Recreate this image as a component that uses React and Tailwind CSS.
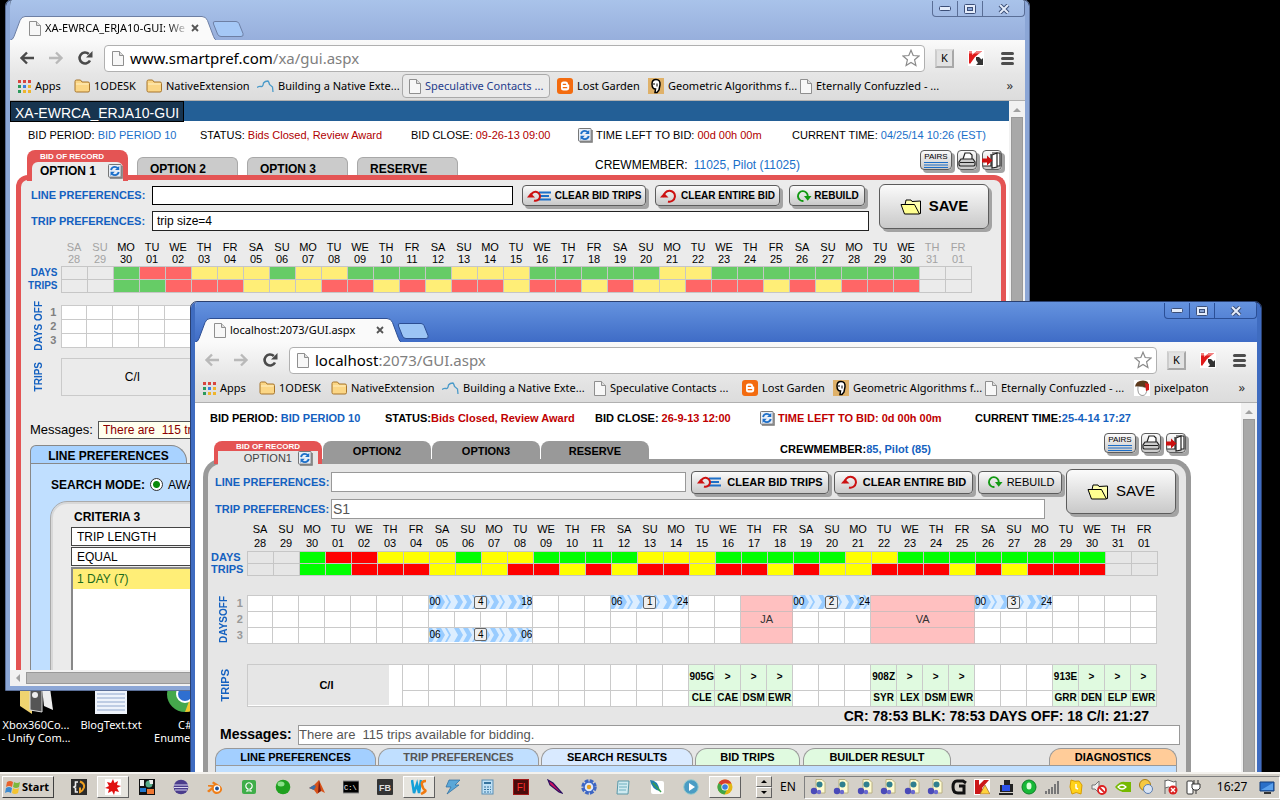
import React from "react";

const DAYS = "..GRRYYYGYYGGGGYYYGGGGGYYGGGGGGGG..";
const TRIPS = "..GGRRRYYYRRYRYRRYRRYRYYRRRYRYRRR..";
const WEEK = ["SA", "SU", "MO", "TU", "WE", "TH", "FR"];
const DATES = [28, 29, 30, ...Array.from({ length: 31 }, (_, i) => i + 1), 1].map((n) => String(n).padStart(2, "0"));
const SOFT = { G: "bg-[#66cc66]", R: "bg-[#ff6666]", Y: "bg-[#ffee77]", ".": "" };
const VIVID = { G: "bg-[#00ff00]", R: "bg-[#ff0000]", Y: "bg-[#ffff00]", ".": "" };

/* ---------- small drawings ---------- */
const Page = ({ className = "h-[15px] w-[12px]" }) => (
  <svg viewBox="0 0 12 15" className={className + " shrink-0"}>
    <path d="M.5 .5h7l4 4v10h-11z" fill="#f7f7f7" stroke="#8f8f8f" />
    <path d="M7.500 .5v4h4" fill="#ddd" stroke="#8f8f8f" />
  </svg>
);
const Folder = () => (
  <svg viewBox="0 0 16 14" className="h-[14px] w-[16px] shrink-0">
    <path d="M1 2.500q0-1.500 1.500-1.500h4l1.500 2h6q1.500 0 1.500 1.500v7q0 1.500-1.500 1.500h-11.500q-1.500 0-1.500-1.500z" fill="#fbd685" stroke="#a6752c" />
    <path d="M2 5h12.500" stroke="#fff0c4" />
  </svg>
);
const Apps = () => (
  <svg viewBox="0 0 13 13" className="h-[13px] w-[13px] shrink-0">
    {["#d8453e", "#d8453e", "#d8453e", "#2b9a5b", "#3a7fe0", "#eeb42c", "#2b9a5b", "#eeb42c", "#eeb42c"].map((c, i) => (
      <rect key={i} x={(i % 3) * 5} y={Math.floor(i / 3) * 5} width="3" height="3" fill={c} />
    ))}
  </svg>
);
const Squiggle = () => (
  <svg viewBox="0 0 17 13" className="h-[13px] w-[17px] shrink-0">
    <path d="M0 7.500q2-1.500 4-1t2.500-3.500q1.500-2 4.500-2 1 1 1.500 3.500l3 2.500.5 5" fill="none" stroke="#4a9ac9" strokeWidth="1.300" />
  </svg>
);
const Blogger = () => (
  <svg viewBox="0 0 16 16" className="h-4 w-4 shrink-0">
    <rect width="16" height="16" rx="3" fill="#f36b0f" />
    <path d="M4 6q0-2.500 2.500-2.500h2q2.500 0 2.500 2.500 0 .8 1.200.8v3q0 2.700-2.700 2.700h-3q-2.500 0-2.500-2.500z" fill="#fff" />
    <path d="M6.300 6.300h2.400M6.300 9.700h3.400" stroke="#f36b0f" strokeWidth="1.300" strokeLinecap="round" />
  </svg>
);
const Skull = () => (
  <svg viewBox="0 0 16 16" className="h-4 w-4 shrink-0">
    <rect width="16" height="16" fill="#dfb169" />
    <path d="M8 1.500q4.500 0 4 5.500l-1 5-2 2.500h-2l.5-3.500q-3.500 0-3.500-5 0-4.500 4-4.500z" fill="#fff" stroke="#000" strokeWidth="1.500" />
    <path d="M6 5v2M9 5.500v3" stroke="#000" />
  </svg>
);
const PixelHead = () => (
  <svg viewBox="0 0 16 16" className="h-4 w-4 shrink-0">
    <rect width="16" height="16" fill="#fff" />
    <path d="M4 6q-1 9 4 9.500t5-8z" fill="#fff" stroke="#999" />
    <path d="M1 6.500q1-6 8-6t5 6l-3 1q-4-2-10-1z" fill="#5d3a1c" />
    <path d="M11 3l4 1v6l-3 1z" fill="#d31c1c" />
  </svg>
);
const BMICON = { apps: Apps, folder: Folder, sq: Squiggle, page: Page, blog: Blogger, skull: Skull, head: PixelHead };

const Arrow = ({ flip, dim }) => (
  <svg viewBox="0 0 16 14" className={(flip ? "rotate-180 " : "") + "h-[14px] w-[16px]"}>
    <path d="M8 1.500L2.500 7l5.500 5.500M3 7h12" fill="none" stroke={dim ? "#b9b9b9" : "#4a4a4a"} strokeWidth="2.400" />
  </svg>
);
const Reload = () => (
  <svg viewBox="0 0 16 16" className="h-4 w-4">
    <path d="M13 10.500a5.500 5.500 0 1 1-1.200-6.500" fill="none" stroke="#4a4a4a" strokeWidth="2.600" />
    <path d="M15.500 1v6.500h-6.500z" fill="#4a4a4a" />
  </svg>
);
const Star = () => (
  <svg viewBox="0 0 18 18" className="h-[18px] w-[18px]">
    <path d="M9 1.200l2.200 5.300 5.800.5-4.400 3.800 1.300 5.700L9 13.500l-4.900 3 1.300-5.700L1 7l5.800-.5z" fill="#fff" stroke="#8a8a8a" strokeWidth="1.200" />
  </svg>
);
const Kasp = () => (
  <svg viewBox="0 0 16 16" className="h-4 w-4">
    <rect width="16" height="16" fill="#fff" />
    <path d="M1 1h3v4l5-4h5l-7 6-5 7-1-1z" fill="#e01b1b" />
    <path d="M1 1h3v4l5-4h5l-3 2.500H1z" fill="#f28080" />
    <path d="M8 7l3 0 2.500 2.500 1.500-1.500v7h-7l2-2-2-3z" fill="#333" />
  </svg>
);
const Refresh = () => (
  <svg viewBox="0 0 16 16" className="h-[15px] w-[15px] shrink-0">
    <rect x=".5" y=".5" width="13.500" height="13.500" rx="1" fill="#e8eef7" stroke="#6b6b6b" />
    <path d="M15 2v13h-13" fill="none" stroke="#777" strokeWidth="1.500" />
    <path d="M3.200 6.300q1-3.300 4-3.300 2 0 3.200 1.300M11.500 8.500q-1 3.300-4 3.300-2 0-3.200-1.300" fill="none" stroke="#1d6fc8" strokeWidth="2" />
    <path d="M12 2v4.500h-4.500zM2.700 12.800v-4.500h4.500z" fill="#1d6fc8" />
  </svg>
);
const Undo = () => (
  <svg viewBox="0 0 18 14" className="h-[14px] w-[18px] shrink-0">
    <path d="M4 8a5.500 5.500 0 1 1 4 4.500" fill="none" stroke="#cc1111" strokeWidth="2" />
    <path d="M0 7.500l4-4.500 4.500 4.500z" fill="#cc1111" transform="translate(0 1)" />
  </svg>
);
const UndoLines = () => (
  <svg viewBox="0 0 24 14" className="h-[14px] w-[24px] shrink-0">
    <path d="M12 3.500h12M12 7h10M12 10.500h12" stroke="#1d6fc8" strokeWidth="1.800" />
    <path d="M4 7.500a4.500 4.500 0 1 1 3 4" fill="none" stroke="#cc1111" strokeWidth="2" />
    <path d="M0 8.500l3.500-4.500 4.500 4.500z" fill="#cc1111" />
  </svg>
);
const Redo = () => (
  <svg viewBox="0 0 18 14" className="h-[14px] w-[17px] shrink-0">
    <path d="M9 12.200a5.200 5.200 0 1 1 4.500-5" fill="none" stroke="#129912" strokeWidth="2" />
    <path d="M9.500 7h8l-4 5z" fill="#129912" />
  </svg>
);
const OpenFolder = () => (
  <svg viewBox="0 0 22 16" className="h-4 w-[22px] shrink-0">
    <path d="M5 6l1-5h5l1 1.500 8.500-.5v12.500l-1.500 0z" fill="#ffffb0" stroke="#000" />
    <path d="M1 5.500h13.500l5 9.500H4.500z" fill="#ffff90" stroke="#000" />
  </svg>
);
const Printer = () => (
  <svg viewBox="0 0 18 16" className="h-4 w-[18px]">
    <path d="M5 7l2-6h5l2 2v4" fill="#fff" stroke="#222" strokeWidth="1.200" />
    <path d="M3 7h12l2 3v3l-1 1H2l-1-1v-3z" fill="#ccc" stroke="#222" strokeWidth="1.200" />
    <path d="M2 10.500h14" stroke="#222" />
  </svg>
);
const Exit = () => (
  <svg viewBox="0 0 20 18" className="h-[18px] w-5 shrink-0">
    <path d="M10 2h8v13h-3M1 15h8v-12" fill="#fff" stroke="#222" strokeWidth="1.200" />
    <path d="M10 4l5-2v14l-5 1z" fill="#fff" stroke="#222" strokeWidth="1.200" />
    <path d="M0 7.500h5v-3l5.500 5-5.500 5v-3H0z" fill="#cc1111" />
  </svg>
);

/* ---------- browser window ---------- */
const THEMES = {
  light: {
    side: "border-[#8ba6d6]", edge: "outline-[#5b6f98]", bar: "bg-linear-to-b from-[#a9c3ea] to-[#97afdc]",
    line: "#6d7fa4", nt: "#a5c8f6", ctl: "border-[#5a6e96]",
  },
  dark: {
    side: "border-[#3f6cc0]", edge: "outline-[#2a4070]", bar: "bg-linear-to-b from-[#6593df] to-[#3f6cc6]",
    line: "#2c4e93", nt: "#9cc5f5", ctl: "border-[#2b4f96]",
  },
};

function BrowserWindow({ theme, title, fade, host, path, backDim, bookmarks, label, className, children }) {
  const t = THEMES[theme];
  return (
    <section aria-label={label} className={"absolute flex flex-col rounded-t-md border-x-4 outline-1 overflow-hidden font-['Noto_Sans',sans-serif] " + t.side + " " + t.edge + " " + className}>
      <div className={"flex h-[40px] shrink-0 items-end " + t.bar}>
        <div className="relative flex h-6 w-[206px] items-center pl-[19px]">
          <svg viewBox="0 0 206 24" preserveAspectRatio="none" className="absolute inset-0 h-6 w-full">
            <path d="M0 24.500q3-1 4-4l6-16q1.500-4 5-4h177q4 0 5.500 4l6 16q1 3 3 4z" fill="#fafafa" stroke={t.line} />
          </svg>
          <span className="relative flex w-full items-center">
            <Page />
            <span className={"ml-[4px] w-[144px] whitespace-nowrap text-[11px] " + (fade ? "mask-r-from-85% mask-r-to-100%" : "")}>{title}</span>
            <button aria-label="Close tab" className="ml-[2px]">
              <svg viewBox="0 0 8 8" className="h-2 w-2"><path d="M1 1l6 6M7 1l-6 6" stroke="#555" strokeWidth="1.800" /></svg>
            </button>
          </span>
        </div>
        <button aria-label="New tab" className="mb-[3px] -ml-1">
          <svg viewBox="0 0 32 16" className="h-4 w-8"><path d="M3 .5h21q2 0 3 2l4 10q1 3-2 3h-20q-2.500 0-3.500-2.500l-4-10q-1-2.500 1.500-2.500z" fill={t.nt} stroke={t.line} /></svg>
        </button>
        <div className={"mb-[23px] ml-auto flex h-4 rounded-b border border-t-0 " + t.ctl}>
          <button aria-label="Minimize" className={"flex w-[25px] items-center justify-center border-r " + t.ctl}>
            <svg viewBox="0 0 12 5" className="h-[5px] w-3"><rect x=".5" y=".5" width="11" height="4" rx="1" fill="#e4ecfa" stroke="#3c4f78" /></svg>
          </button>
          <button aria-label="Maximize" className={"flex w-[25px] items-center justify-center border-r " + t.ctl}>
            <svg viewBox="0 0 12 10" className="h-[10px] w-3"><rect x=".5" y=".5" width="11" height="9" rx="1" fill="#e4ecfa" stroke="#3c4f78" /><rect x="3.500" y="3.500" width="5" height="3" fill="#8ba6d6" stroke="#3c4f78" /></svg>
          </button>
          <button aria-label="Close" className="flex w-[41px] items-center justify-center">
            <svg viewBox="0 0 12 10" className="h-[10px] w-3"><path d="M2 1l8 8M10 1l-8 8" stroke="#3c4f78" strokeWidth="4" /><path d="M2 1l8 8M10 1l-8 8" stroke="#e4ecfa" strokeWidth="2" /></svg>
          </button>
        </div>
      </div>
      <div className="flex h-[34px] shrink-0 items-center bg-linear-to-b from-[#fafafa] to-[#e6e6e6] pt-0.5">
        <button aria-label="Back" className="ml-[9px]"><Arrow dim={backDim} /></button>
        <button aria-label="Forward" className="ml-[13px]"><Arrow flip dim /></button>
        <button aria-label="Reload" className="ml-[13px]"><Reload /></button>
        <div className="ml-[11px] flex h-[27px] flex-1 items-center rounded-sm border border-[#b0b0b0] bg-white pr-1 pl-[7px]">
          <Page />
          <a href="#address" className="ml-[6px] text-[15px] leading-[22px] whitespace-nowrap text-black">
            {host}<span className="text-[#808080]">{path}</span>
          </a>
          <button aria-label="Bookmark" className="ml-auto"><Star /></button>
        </div>
        <button aria-label="K extension" className="ml-[10px] flex h-[19px] w-[19px] items-center justify-center border-2 border-[#a8a8a8] border-t-[#ddd] border-l-[#ccc] bg-[#e2e2e2] text-[11px] text-black">K</button>
        <button aria-label="Kaspersky" className="ml-[14px]"><Kasp /></button>
        <button aria-label="Menu" className="mr-[11px] ml-[17px] flex flex-col gap-[2px]">
          <span className="h-[3px] w-[13px] rounded-sm bg-[#4d4d4d]" /><span className="h-[3px] w-[13px] rounded-sm bg-[#4d4d4d]" /><span className="h-[3px] w-[13px] rounded-sm bg-[#4d4d4d]" />
        </button>
      </div>
      <nav className="flex h-[27px] shrink-0 items-center border-b border-[#b0b0b0] bg-linear-to-b from-[#e6e6e6] to-[#dcdcdc] pb-[2px] pl-2">
        {bookmarks.map(([icon, text, w, hot]) => {
          const I = BMICON[icon];
          return (
            <a key={text} href="#bookmark" className={"flex h-6 shrink-0 items-center text-[11px] whitespace-nowrap text-black " + w}>
              <span className={"flex h-6 items-center gap-[4px] " + (hot ? "-ml-[7px] rounded-sm border border-[#a9a9a9] bg-[#ebebeb] px-[6px] text-[#1f3c8c]" : "")}>
                <I /><span>{text}</span>
              </span>
            </a>
          );
        })}
        <button aria-label="More bookmarks" className="mr-3 ml-auto text-[13px] text-[#333]">»</button>
      </nav>
      <div className="flex min-h-0 flex-1 overflow-hidden bg-white font-['Liberation_Sans',Arial,sans-serif]">
        <div className="min-w-0 flex-1 overflow-hidden">{children}</div>
        <div className="flex w-4 shrink-0 flex-col items-center bg-[#f1f1f1]">
          <svg viewBox="0 0 8 4" className="mt-[7px] mb-[5px] h-1 w-2"><path d="M0 4L4 0l4 4z" fill="#a0a0a0" /></svg>
          <div className="w-[12px] flex-1 border border-[#999] bg-[#a8a8a8]" />
        </div>
      </div>
    </section>
  );
}

/* ---------- shared page parts ---------- */
const Push = ({ children, className }) => (
  <button className={"flex shrink-0 items-center justify-center rounded-[4px] border border-[#5c5c5c] bg-linear-to-b from-[#fbfbfb] to-[#c9c9c9] whitespace-nowrap text-black shadow-[3px_3px_0_#a3a3a3] " + className}>{children}</button>
);
const ToolButtons = () => (
  <div className="flex items-start gap-[5px]">
    <Push className="h-[20px] w-[32px] flex-col gap-[1px] text-[8px] leading-[8px]">
      <span>PAIRS</span>
      <svg viewBox="0 0 24 6" className="h-[6px] w-6"><path d="M0 .5h24M0 3h24M0 5.500h24" stroke="#1d6fc8" /></svg>
    </Push>
    <Push className="h-[20px] w-[20px]"><Printer /></Push>
    <Push className="h-[20px] w-[20px]"><Exit /></Push>
  </div>
);
const Pair = ({ k, v, w, vc, icon, kc = "" }) => (
  <div className={"flex shrink-0 items-center gap-[3px] whitespace-nowrap " + w}>
    {icon && <Refresh />}
    <span className={kc}>{k}</span>
    <span className={vc}>{v}</span>
  </div>
);

function ColorGrid({ palette, head, dim, rowH, labelW, className, labelClass }) {
  return (
    <table className={"table-fixed border-collapse " + className}>
      <colgroup><col className={labelW} />{DATES.map((_, i) => <col key={i} className="w-[26px]" />)}</colgroup>
      <thead>
        <tr>
          <td />
          {DATES.map((d, i) => (
            <th key={i} scope="col" className={"p-0 text-center align-top text-[11px] font-normal " + head + (dim && (i < 2 || i > 32) ? " text-[#a3a3a3]" : " text-black")}>
              {WEEK[i % 7]}<br />{d}
            </th>
          ))}
        </tr>
      </thead>
      <tbody>
        {[["DAYS", DAYS], ["TRIPS", TRIPS]].map(([name, data]) => (
          <tr key={name} className={rowH}>
            <th scope="row" className={"p-0 leading-[11px] font-bold text-[#1461c0] " + labelClass}>{name}</th>
            {data.split("").map((c, i) => <td key={i} className={"border border-[#c6c6c6] p-0 " + palette[c]} />)}
          </tr>
        ))}
      </tbody>
    </table>
  );
}

const SideLabel = ({ children, className = "text-[10px]" }) => (
  <div className="flex h-0 items-center justify-center">
    <span className={"shrink-0 rotate-180 leading-[12px] font-bold whitespace-nowrap text-[#1461c0] [writing-mode:vertical-rl] " + className}>{children}</span>
  </div>
);

const Empty = ({ n, className = "bg-white" }) =>
  Array.from({ length: n }, (_, i) => <td key={i} className={"border border-[#cacaca] p-0 " + className} />);

/* ---------- first window's page ---------- */
function RosterPage() {
  return (
    <main className="text-[11px]">
      <div className="flex h-[20px] bg-[#235f96]">
        <h1 className="h-[21px] border border-black bg-[#17344f] px-[4px] text-[14px] leading-[23px] whitespace-nowrap text-white">XA-EWRCA_ERJA10-GUI</h1>
      </div>
      <div className="flex h-[29px] items-center pl-[18px]">
        <Pair k="BID PERIOD:" v="BID PERIOD 10" w="w-[172px]" vc="text-[#1a6fc9]" />
        <Pair k="STATUS:" v="Bids Closed, Review Award" w="w-[211px]" vc="text-[#b00000]" />
        <Pair k="BID CLOSE:" v="09-26-13 09:00" w="w-[167px]" vc="text-[#b00000]" />
        <Pair k="TIME LEFT TO BID:" v="00d 00h 00m" w="w-[214px]" vc="text-[#b00000]" icon />
        <Pair k="CURRENT TIME:" v="04/25/14 10:26 (EST)" w="" vc="text-[#1a6fc9]" />
      </div>
      <div className="flex h-[25px] items-start pl-[17px]">
        <button className="relative z-10 h-[31px] w-[101px] rounded-t-lg bg-[#e45454] px-[5px] text-left">
          <span className="block h-[12px] pl-2 text-[8px] leading-[13px] font-bold text-white">BID OF RECORD</span>
          <span className="flex h-[19px] items-center gap-[12px] rounded-t-md bg-[#ebebeb] pb-px pl-2 text-[12px] font-bold whitespace-nowrap">OPTION 1 <Refresh /></span>
        </button>
        {["OPTION 2", "OPTION 3", "RESERVE"].map((t) => (
          <button key={t} className="mt-[7px] ml-[9px] h-[18px] w-[101px] rounded-t-md border border-b-0 border-[#a8a8a8] bg-[#cbcbcb] pt-[4px] pl-3 text-left text-[12px] leading-[15px] font-bold">{t}</button>
        ))}
        <div className="mt-[6px] ml-[137px] flex gap-[6px] text-[12px]"><span>CREWMEMBER:</span><span className="text-[#1a6fc9]">11025, Pilot (11025)</span></div>
        <div className="mr-[7px] ml-auto"><ToolButtons /></div>
      </div>
      <div className="mr-[3px] ml-[6px] h-[520px] rounded-t-xl border-[5px] border-b-0 border-[#e45454] bg-[#ebebeb] pt-[4px]">
        <div className="flex gap-[10px] pr-[12px] pl-[10px]">
          <div className="flex-1">
            <div className="flex h-[23px] items-center gap-[9px]">
              <div className="flex flex-1 items-center">
                <label htmlFor="line1" className="w-[121px] font-bold text-[#1461c0]">LINE PREFERENCES:</label>
                <input id="line1" className="h-[19px] min-w-0 flex-1 border border-black bg-white px-1" />
              </div>
              <Push className="h-[21px] w-[124px] gap-[4px] text-[10px] font-bold"><UndoLines />CLEAR BID TRIPS</Push>
              <Push className="h-[21px] w-[125px] gap-[3px] text-[10px] font-bold"><Undo />CLEAR ENTIRE BID</Push>
              <Push className="mr-[4px] h-[21px] w-[76px] gap-[2px] text-[10px] font-bold"><Redo />REBUILD</Push>
            </div>
            <div className="mt-[4px] flex h-[20px] items-center">
              <label htmlFor="trip1" className="w-[121px] font-bold text-[#1461c0]">TRIP PREFERENCES:</label>
              <input id="trip1" defaultValue="trip size=4" className="h-[20px] min-w-0 flex-1 border border-[#222] bg-white px-1 text-[12px]" />
            </div>
          </div>
          <Push className="h-[45px] w-[110px] gap-[7px] rounded-md text-[15px] font-bold"><OpenFolder />SAVE</Push>
        </div>
        <ColorGrid palette={SOFT} dim head="h-[25px] leading-[12px]" rowH="h-[13px]" labelW="w-[35px]" labelClass="text-[10px] text-right pr-[3px]" className="mt-[10px] ml-[5px] w-[945px]" />
        <table className="mt-[12px] ml-[5px] w-[945px] table-fixed border-collapse">
          <colgroup><col className="w-[20px]" /><col className="w-[15px]" />{DATES.map((_, i) => <col key={i} />)}</colgroup>
          <tbody>
            {[1, 2, 3].map((n) => (
              <tr key={n} className="h-[14px]">
                {n === 1 && <th rowSpan={3} className="p-0 pl-[6px]"><SideLabel>DAYS OFF</SideLabel></th>}
                <th className="p-0 text-center text-[11px] leading-[12px] text-[#808080]">{n}</th>
                <Empty n={35} />
              </tr>
            ))}
          </tbody>
        </table>
        <table className="mt-[10px] ml-[5px] w-[945px] table-fixed border-collapse">
          <colgroup><col className="w-[35px]" /><col className="w-[143px]" /><col /></colgroup>
          <tbody>
            <tr className="h-[37px]">
              <th className="p-0 pr-[8px]"><SideLabel>TRIPS</SideLabel></th>
              <td className="border border-[#cacaca] p-0 text-center text-[12px]">C/I</td>
              <td className="border border-[#cacaca] bg-white p-0" />
            </tr>
          </tbody>
        </table>
        <div className="mt-[25px] flex h-[18px] items-center pr-3 pl-[9px]">
          <label htmlFor="msg1" className="w-[68px] text-[13px]">Messages:</label>
          <input id="msg1" readOnly value="There are  115 trips available for bidding." className="h-[18px] flex-1 border border-[#555] bg-[#ffffee] px-1 text-[12px] text-[#8b0000]" />
        </div>
        <div className="mt-[6px] ml-[9px]">
          <button className="block h-[18px] w-[157px] rounded-t-md rounded-tr-2xl border border-b-0 border-[#888] bg-[#a8d2ff] pt-[3px] text-[12px] leading-[15px] font-bold">LINE PREFERENCES</button>
          <div className="h-[240px] border border-[#888] bg-[#c0dfff] pt-[12px] pl-5">
            <label className="flex items-center gap-[5px] text-[12px]"><b>SEARCH MODE:</b>
              <input type="radio" name="mode" defaultChecked className="h-[13px] w-[13px] appearance-none rounded-full border border-[#333] bg-[radial-gradient(circle,#0a8a0a_3px,#fff_4px)]" /> AWARD
            </label>
            <div className="mt-[8px] w-[400px] rounded-tl-2xl border-2 border-[#d8d8d8] bg-[#ebebeb] pl-[18px] outline outline-[#aaa]">
              <h2 className="pt-[4px] pl-[3px] text-[12px] leading-[18px] font-bold">CRITERIA 3</h2>
              <select aria-label="Criterion" className="mt-px block h-[19px] w-full appearance-none border border-[#444] bg-white px-[5px] text-[12px]"><option>TRIP LENGTH</option></select>
              <select aria-label="Comparison" className="mt-px block h-[19px] w-full appearance-none border border-[#444] bg-white px-[5px] text-[12px]"><option>EQUAL</option></select>
              <div className="mt-px h-[160px] border-2 border-[#888] bg-white">
                <button className="block h-[20px] w-full bg-[#ffee77] pl-[4px] text-left text-[12px] text-[#1a6a1a]">1 DAY (7)</button>
              </div>
            </div>
          </div>
        </div>
      </div>
    </main>
  );
}

/* ---------- second window's page ---------- */
function Span({ n, from, to, badge }) {
  return (
    <td colSpan={n} className="relative border-r border-b border-[#cacaca] bg-white p-0 pb-px">
      <div className="relative flex h-[14px] items-center justify-between overflow-hidden bg-[#ddeeff] text-[10px] leading-[14px] text-black">
        <svg className="absolute inset-0 h-full w-full">
          {Array.from({ length: n * 3 }, (_, i) => (
            <path key={i} transform={`translate(${i * 9 - 2} 0)`} d={i % 3 === 2 ? "M0 0h2l4 7-4 7h-2l4-7z" : "M0 0h5l4 7-4 7h-5l4-7z"} fill="#99ccff" />
          ))}
        </svg>
        <span className="relative">{from}</span>
        <span className="relative flex h-[13px] w-[13px] items-center justify-center rounded-[2px] border border-[#666] bg-[#efefef]">{badge}</span>
        <span className="relative">{to}</span>
      </div>
    </td>
  );
}
const Pink = ({ n, children }) => <td colSpan={n} className="border border-[#d0bcbc] bg-[#ffc0c0] p-0 text-center text-[11px] leading-[14px] text-[#333]">{children}</td>;
const Green = ({ list }) => list.map((t, i) => (
  <td key={i} className="overflow-hidden border border-[#cacaca] bg-[#e0fae0] p-0 text-center text-[10px] leading-[14px] font-bold whitespace-nowrap text-black">{t}</td>
));

function BuilderPage() {
  const bottom = [
    ["LINE PREFERENCES", "w-[161px] bg-[#a3cfff] mr-[2px]"],
    ["TRIP PREFERENCES", "w-[161px] bg-[#c0dfff] text-[#555] mr-[2px]"],
    ["SEARCH RESULTS", "w-[152px] bg-[#d9eaff] mr-[2px]"],
    ["BID TRIPS", "w-[105px] bg-[#e0fae0] mr-[3px]"],
    ["BUILDER RESULT", "w-[148px] bg-[#e0fae0]"],
    ["DIAGNOSTICS", "w-[128px] bg-[#ffcc99] ml-auto"],
  ];
  return (
    <main className="text-[11px]">
      <div className="flex h-[29px] items-center pt-px pl-[15px] font-bold">
        <Pair k="BID PERIOD:" v="BID PERIOD 10" w="w-[175px]" vc="text-[#1461c0]" />
        <Pair k="STATUS:" v="Bids Closed, Review Award" w="w-[210px] gap-0!" vc="text-[#c00000]" />
        <Pair k="BID CLOSE:" v="26-9-13 12:00" w="w-[165px]" vc="text-[#c00000]" />
        <Pair k="TIME LEFT TO BID:" v="0d 00h 00m" w="w-[215px]" vc="text-[#c00000]" kc="text-[#c00000]" icon />
        <Pair k="CURRENT TIME:" v="25-4-14 17:27" w="gap-0!" vc="text-[#1461c0]" />
      </div>
      <div className="flex h-[27px] items-start pl-[19px]">
        <button className="relative z-10 mt-[9px] h-[23px] w-[108px] rounded-t-lg bg-[#e45454] px-[4px]">
          <span className="block h-[10px] text-[8px] leading-[11px] font-bold text-white">BID OF RECORD</span>
          <span className="flex h-[15px] items-center justify-end gap-[6px] bg-[#e6e6e6] pr-[5px] text-[11px] text-[#444]">OPTION1 <Refresh /></span>
        </button>
        {["OPTION2", "OPTION3", "RESERVE"].map((t) => (
          <button key={t} className="mt-[9px] ml-[1px] h-[20px] w-[108px] rounded-t-lg bg-[#999] text-[11px] leading-[20px] font-bold">{t}</button>
        ))}
        <div className="mt-[9px] ml-[131px] font-bold whitespace-nowrap">CREWMEMBER:<span className="text-[#1461c0]">85, Pilot (85)</span></div>
        <div className="mt-px mr-[55px] ml-auto"><ToolButtons /></div>
      </div>
      <div className="mr-[50px] ml-[8px] h-[400px] rounded-t-[18px] border-[5px] border-b-0 border-[#999] bg-[#e6e6e6] pt-[5px]">
        <div className="flex gap-[4px] pr-[10px] pl-[7px]">
          <div className="flex-1">
            <div className="flex h-[26px] items-center gap-[5px]">
              <div className="flex flex-1 items-center">
                <label htmlFor="line2" className="w-[116px] font-bold text-[#1461c0]">LINE PREFERENCES:</label>
                <input id="line2" className="h-[20px] min-w-0 flex-1 border border-[#999] bg-white px-px" />
              </div>
              <Push className="h-[23px] w-[138px] gap-[6px] text-[11px] font-bold"><UndoLines />CLEAR BID TRIPS</Push>
              <Push className="h-[23px] w-[139px] gap-[4px] text-[11px] font-bold"><Undo />CLEAR ENTIRE BID</Push>
              <Push className="h-[23px] w-[84px] gap-[4px] text-[11px]"><Redo />REBUILD</Push>
            </div>
            <div className="mt-[4px] mr-[17px] flex h-[20px] items-center">
              <label htmlFor="trip2" className="w-[116px] font-bold text-[#1461c0]">TRIP PREFERENCES:</label>
              <input id="trip2" defaultValue="S1" className="h-[20px] min-w-0 flex-1 border border-[#999] bg-white px-px text-[14px] text-[#555]" />
            </div>
          </div>
          <Push className="h-[45px] w-[110px] gap-[7px] rounded-md text-[15px]"><OpenFolder />SAVE</Push>
        </div>
        <ColorGrid palette={VIVID} head="h-[29px] leading-[14px]" rowH="h-[12px]" labelW="w-[36px]" labelClass="text-[11px] text-left" className="mt-[3px] ml-[3px] w-[946px]" />
        <table className="mt-[19px] ml-[3px] w-[946px] table-fixed border-collapse">
          <colgroup><col className="w-[22px]" /><col className="w-[14px]" />{DATES.map((_, i) => <col key={i} />)}</colgroup>
          <tbody>
            <tr className="h-[16px]">
              <th rowSpan={3} className="p-0 pl-[4px]"><SideLabel>DAYSOFF</SideLabel></th>
              <th className="p-0 text-[11px] leading-[14px] text-[#999]">1</th>
              <Empty n={7} /><Span n={4} from="00" to="18" badge="4" /><Empty n={3} /><Span n={3} from="06" to="24" badge="1" />
              <Empty n={2} /><Pink n={2} /><Span n={3} from="00" to="24" badge="2" /><Pink n={4} /><Span n={3} from="00" to="24" badge="3" /><Empty n={4} />
            </tr>
            <tr className="h-[16px]">
              <th className="p-0 text-[11px] leading-[14px] text-[#999]">2</th>
              <Empty n={19} /><Pink n={2}>JA</Pink><Empty n={3} /><Pink n={4}>VA</Pink><Empty n={7} />
            </tr>
            <tr className="h-[16px]">
              <th className="p-0 text-[11px] leading-[14px] text-[#999]">3</th>
              <Empty n={7} /><Span n={4} from="06" to="06" badge="4" /><Empty n={8} /><Pink n={2} /><Empty n={3} /><Pink n={4} /><Empty n={7} />
            </tr>
          </tbody>
        </table>
        <table className="mt-[20px] ml-[3px] w-[946px] table-fixed border-collapse">
          <colgroup><col className="w-[36px]" />{DATES.map((_, i) => <col key={i} />)}</colgroup>
          <tbody>
            <tr className="h-[26px]">
              <th rowSpan={2} className="p-0 pr-[8px]"><SideLabel className="text-[11px]">TRIPS</SideLabel></th>
              <td rowSpan={2} colSpan={6} className="border border-[#cacaca] bg-white p-0 pr-[13px]">
                <div className="flex h-[40px] items-center justify-center bg-[#e6e6e6] pl-4 text-[11px] font-bold">C/I</div>
              </td>
              <Empty n={11} /><Green list={["905G", ">", ">", ">"]} /><Empty n={3} /><Green list={["908Z", ">", ">", ">"]} /><Empty n={3} /><Green list={["913E", ">", ">", ">"]} />
            </tr>
            <tr className="h-[16px]">
              <Empty n={11} /><Green list={["CLE", "CAE", "DSM", "EWR"]} /><Empty n={3} /><Green list={["SYR", "LEX", "DSM", "EWR"]} /><Empty n={3} /><Green list={["GRR", "DEN", "ELP", "EWR"]} />
            </tr>
          </tbody>
        </table>
        <p className="h-[18px] pr-[37px] text-right text-[14px] leading-[18px] font-bold">CR: 78:53 BLK: 78:53 DAYS OFF: 18 C/I: 21:27</p>
        <div className="flex h-[20px] items-center pr-[6px] pl-[12px]">
          <label htmlFor="msg2" className="w-[78px] text-[14px] font-bold">Messages:</label>
          <input id="msg2" readOnly value="There are  115 trips available for bidding." className="h-[20px] flex-1 border border-[#999] bg-white text-[13px] text-[#555]" />
        </div>
        <div className="mt-[3px] mr-[9px] ml-[7px] flex h-[17px]">
          {bottom.map(([t, c]) => (
            <button key={t} className={"h-[17px] shrink-0 rounded-t-xl border border-b-0 border-[#999] text-[11px] leading-[14px] font-bold " + c}>{t}</button>
          ))}
        </div>
        <div className="mr-[9px] ml-[7px] h-[60px] border border-[#999] bg-[#c0dfff]" />
      </div>
    </main>
  );
}

/* ---------- taskbar ---------- */
const Tile = ({ bg, fg, t }) => (
  <svg viewBox="0 0 16 16" className="h-4 w-4"><rect width="16" height="16" rx="1" fill={bg} /><text x="8" y="11.500" textAnchor="middle" fontSize="9" fill={fg} fontFamily="Liberation Sans" fontWeight="bold">{t}</text></svg>
);
const Svg = ({ children }) => <svg viewBox="0 0 16 16" className="h-4 w-4">{children}</svg>;
const Chrome = () => (
  <Svg>
    <circle cx="8" cy="8" r="7.500" fill="#e2b714" />
    <path d="M8 8L1.500 4.200A7.500 7.500 0 0 1 14.500 4.500H8z" fill="#d93c2e" />
    <path d="M8 8L1.500 4.200A7.500 7.500 0 0 0 7.500 15.500L10.500 9.500z" fill="#3fa648" />
    <circle cx="8" cy="8" r="3.600" fill="#fff" /><circle cx="8" cy="8" r="2.800" fill="#3c7ee0" />
  </Svg>
);
const LAUNCH = [
  ["Brackets", <Svg><rect width="16" height="16" fill="#2b2b2b" /><path d="M7 3H4.500v4L3 8l1.500 1v4H7" fill="none" stroke="#eee" strokeWidth="1.600" /><path d="M9 2.500q5 2 4 6-1 3-4 4.500V8.500" fill="none" stroke="#f0a020" strokeWidth="2" /></Svg>],
  ["Splat", <Svg><rect width="16" height="16" fill="#fff" /><path d="M8 0l1.500 4L13 2l-1 4 4 1-4 2 2 4-4-1-1 4-2-4-4 2 1-4-4-1 4-2L2 3l4 1z" fill="#e01010" /></Svg>, true],
  ["Sprites", <Svg><rect width="16" height="16" fill="#111" /><circle cx="10" cy="5" r="3.500" fill="#5a8" /><path d="M10 1h4v4h-3z" fill="#eee" /><rect x="1" y="9" width="6" height="4" fill="#27c" /><rect x="8" y="10" width="7" height="5" fill="#e73" /><rect x="1" y="1" width="4" height="6" fill="#eee" /></Svg>],
  ["Eclipse", <Svg><circle cx="8" cy="8" r="7.300" fill="#4a3c8c" /><path d="M1 6h14M1 8.500h14M2 11h12" stroke="#d8d4ee" strokeWidth="1.200" /></Svg>],
  ["Blender", <Svg><path d="M0 12l5-4-4-.5v-1.500h6l-2-2 1.500-1.500 7 4.500q3 3 .5 6-3 3-6.500 1.500-2-1-2.500-3.500L2 13.500z" fill="#ef7f1a" /><circle cx="10" cy="9.500" r="3.200" fill="#fff" /><circle cx="10" cy="9.500" r="1.900" fill="#1f4f94" /></Svg>],
  ["Android tool", <Svg><rect x="1" y="1" width="14" height="14" rx="2" fill="#3fae49" /><path d="M5 12h2V10a3.200 3.200 0 1 1 2 0v2h2" fill="none" stroke="#fff" strokeWidth="1.200" /></Svg>],
  ["Green ball", <Svg><circle cx="8" cy="8" r="7.300" fill="#1fa01f" /><ellipse cx="6" cy="5" rx="3.500" ry="2.500" fill="#8be08b" /></Svg>],
  ["Matlab", <Svg><path d="M0 9l5-3 5-5 6 13-4-2-4 3-3-4z" fill="#d8531a" /><path d="M0 9l5-3 2 1-2 4z" fill="#3a6fa8" /><path d="M10 1l2 11-3 2z" fill="#7c1a10" /></Svg>],
  ["Console", <Svg><rect y="2" width="16" height="12" fill="#000" stroke="#888" /><text x="1" y="11" fontSize="7" fill="#fff" fontFamily="Liberation Mono">C:\</text></Svg>],
  ["Flash Builder", <Tile bg="#333" fg="#ddd" t="FB" />],
  ["WebStorm", <Svg><path d="M1 1l2 13 3-9 2 9 2-13" fill="none" stroke="#14a0d8" strokeWidth="2.500" /><path d="M15 2q-5 0-4 4t3 5-4 4" fill="none" stroke="#f07a10" strokeWidth="2.500" /></Svg>, true],
  ["Lightning", <Svg><path d="M4 1h11l-5 5h4L2 15l4-7H1z" fill="#5aa7d8" stroke="#2b6c9e" strokeWidth=".7" /></Svg>],
  ["Calculator", <Svg><rect x="3" y="1" width="11" height="14" fill="#bfe0f5" stroke="#5a8fb5" /><path d="M5 4h7" stroke="#35739e" strokeWidth="2" /><path d="M5 8h7M5 10.500h7M5 13h7" stroke="#35739e" strokeDasharray="2 1" /></Svg>],
  ["Flash", <Svg><rect x=".5" y=".5" width="15" height="15" fill="#4c0c0c" stroke="#a01818" /><text x="8" y="11.500" textAnchor="middle" fontSize="10" fill="#ff3030" fontFamily="Liberation Sans">Fl</text></Svg>],
  ["Pen", <Svg><path d="M1 1l5 3 9 10-3-1L3 6z" fill="#d01060" stroke="#2a1060" strokeWidth="1.200" /></Svg>],
  ["Settings", <Svg><circle cx="8" cy="8" r="6" fill="#fff" stroke="#3d66c4" strokeWidth="3.500" strokeDasharray="3.500 1.200" /><circle cx="8" cy="8" r="5" fill="#dfe9fb" stroke="#3d66c4" strokeWidth="1.500" /><circle cx="8" cy="8" r="2.200" fill="#e8a020" /></Svg>],
  ["Notepad", <Svg><path d="M3 2h11l-1 13H2z" fill="#cfeaf0" stroke="#5a98a8" /><path d="M4 5h8M4 8h8M4 11h7" stroke="#6fb0c0" /></Svg>],
  ["Feather", <Svg><rect x="2" y="2" width="13" height="13" rx="2" fill="#fff" /><path d="M1 1q8 0 10 11-8-1-10-11z" fill="#1f7fae" /><path d="M4 4l8 9" stroke="#3ba04b" strokeWidth="1.500" /></Svg>],
  ["Media player", <Svg><circle cx="8" cy="8" r="7.300" fill="#4a9cc4" stroke="#9cc" /><path d="M6 4l6 4-6 4z" fill="#fff" /></Svg>],
  ["Chrome", <Chrome />, true],
];
const Node = () => <Svg><path d="M6 .5h6l3 3V14H6z" fill="#fffbd0" stroke="#b9b080" /><circle cx="9.500" cy="5.500" r="3" fill="#2f7f8f" /><circle cx="4" cy="12" r="3.200" fill="#4a4ab8" /><circle cx="9" cy="13" r="2.200" fill="#6a6ad0" /></Svg>;
const TRAY = [
  <Node />, <Node />, <Node />, <Node />, <Node />, <Node />,
  <Svg><path d="M15 4l-3-2H6q-4 0-4 6t5 6h6V7H8" fill="none" stroke="#111" strokeWidth="3" /></Svg>,
  <Svg><rect width="16" height="16" fill="#fff" /><path d="M1 1h4v5l5-5h5l-7 8 3 6H7L1 15z" fill="#cc1818" /><path d="M11 6l5 9H6z" fill="#ffd23c" stroke="#963" strokeWidth=".7" /></Svg>,
  <Svg><path d="M6 1h6v4h3v8H2V6h4z" fill="#222" /><rect x="4" y="6" width="8" height="6" fill="#2a50e8" /><path d="M1 15h14" stroke="#222" strokeWidth="2" /></Svg>,
  <Svg><circle cx="8" cy="8" r="7" fill="#18b838" stroke="#0d7f24" /><ellipse cx="8" cy="7" rx="2.500" ry="3.500" fill="#d7ffd7" /></Svg>,
  <Svg><path d="M2 15v-3M5 15v-5M8 15V8M11 15V5M14 15V2" stroke="#777" strokeWidth="2" /></Svg>,
  <Svg><path d="M3 1q4 2 8 1l3 4-1 9q-5-3-9 0l-2-7z" fill="#ffd21a" stroke="#d89c00" /><path d="M8 5v4l2 1" fill="none" stroke="#fff" strokeWidth="1.500" /></Svg>,
  <Svg><path d="M1 6h3l4-4v12l-4-4H1z" fill="#eee" stroke="#777" /><circle cx="11" cy="11" r="4" fill="#fff" stroke="#d22" strokeWidth="1.800" /><path d="M8 8l6 6" stroke="#d22" strokeWidth="1.800" /></Svg>,
  <Svg><path d="M0 8q5-6 10-5v10q-6 0-10-5z" fill="#76b900" /><path d="M7 3h9v10H7z" fill="#76b900" /><path d="M3 8q4-4 8 0-4 4-8 0z" fill="none" stroke="#fff" strokeWidth="1.200" /></Svg>,
  <Svg><circle cx="7" cy="6" r="5.500" fill="#f5c842" stroke="#a87c10" /><circle cx="10" cy="10" r="4.500" fill="#d8e4f4" stroke="#5a7db0" /></Svg>,
  <Svg><path d="M3 15V1M3 2q3-2 6 0t5 0v7q-3 2-5 0T3 9" fill="#fff" stroke="#666" /><circle cx="11" cy="11" r="4.500" fill="#d92020" /><path d="M9 9l4 4M13 9l-4 4" stroke="#fff" strokeWidth="1.400" /></Svg>,
  <Svg><rect x="2" y="2" width="6" height="13" rx="1" fill="#fff" stroke="#333" /><path d="M9 1v4M13 1v4M7 5h8v4l-2 2h-4l-2-2zM11 11v4" fill="#fff" stroke="#333" /></Svg>,
];

function Taskbar() {
  return (
    <footer className="flex h-[28px] shrink-0 items-center overflow-hidden border-t-2 border-[#f4f2ee] bg-[#d4d0c8] font-['Noto_Sans',sans-serif]">
      <button className="ml-[2px] flex h-[22px] w-[52px] shrink-0 items-center gap-px border border-t-white border-r-[#404040] border-b-[#404040] border-l-white pl-[2px] text-[11px] font-bold">
        <svg viewBox="0 0 16 16" className="h-4 w-4 shrink-0">
          <path d="M2 3q3-2 6 0l-1 5q-3-2-6 0z" fill="#e8622c" /><path d="M9 3q3 2 6 0l-1 5q-3 2-6 0z" fill="#7cb83c" />
          <path d="M1 9q3-2 6 0l-1 5q-3-2-6 0z" fill="#3c8ad0" /><path d="M8 9q3 2 6 0l-1 5q-3 2-6 0z" fill="#f4c430" />
        </svg>
        Start
      </button>
      <div className="ml-[8px] flex shrink-0">
        {LAUNCH.map(([name, icon, on]) => (
          <button key={name} aria-label={name} className={"mx-[1px] flex h-[22px] w-[32px] items-center justify-center " + (on ? "border border-t-white border-r-[#606060] border-b-[#606060] border-l-white bg-[#e6e4de]" : "")}>{icon}</button>
        ))}
      </div>
      <div className="ml-[14px] flex shrink-0 flex-col">
        {["M0 3L3 0l3 3z", "M0 0h6L3 3z"].map((d, i) => (
          <button key={d} aria-label={i ? "Scroll down" : "Scroll up"} className="flex h-[11px] w-[16px] items-center justify-center border border-t-white border-r-[#606060] border-b-[#606060] border-l-white">
            <svg viewBox="0 0 6 3" className="h-[3px] w-[6px]"><path d={d} /></svg>
          </button>
        ))}
      </div>
      <span className="mx-[8px] text-[12px]">EN</span>
      <div className="flex h-[23px] min-w-0 flex-1 items-center justify-between border border-t-[#808080] border-r-white border-b-white border-l-[#808080] pr-[4px] pl-[5px]">
        {TRAY.map((icon, i) => <span key={i} className="shrink-0">{icon}</span>)}
        <time className="ml-2 text-[12px]">16:27</time>
        <svg viewBox="0 0 16 16" className="ml-1 h-4 w-4 shrink-0"><path d="M1 3h14v9H1z" fill="#2a6fc8" stroke="#123c78" /><path d="M2 11l12-7v7z" fill="#5aa0ec" /><path d="M5 14h7" stroke="#333" strokeWidth="2" /></svg>
      </div>
    </footer>
  );
}

const common = [
  ["apps", "Apps", "w-[56px]"], ["folder", "1ODESK", "w-[72px]"], ["folder", "NativeExtension", "w-[111px]"],
  ["sq", "Building a Native Exte...", "w-[152px]"], ["page", "Speculative Contacts ...", "w-[148px]"],
  ["blog", "Lost Garden", "w-[91px]"], ["skull", "Geometric Algorithms f...", "w-[152px]"],
  ["page", "Eternally Confuzzled - ...", "w-[149px]"],
];

export default function App() {
  return (
    <div className="flex h-screen flex-col overflow-hidden bg-black">
      <div className="relative flex-1 overflow-hidden">
        <div className="absolute top-[686px] left-0 flex items-start font-['Noto_Sans',sans-serif] text-[11px] leading-[13px] text-white">
          <div className="flex w-[72px] flex-col items-center whitespace-nowrap">
            <svg viewBox="0 0 36 28" className="mb-[4px] h-7 w-9"><path d="M2 0h12v28L2 20z" fill="#f0d470" /><path d="M12 0h12v26l-12-2z" fill="#555" stroke="#ddd" /><circle cx="17" cy="9" r="3" fill="#eee" /><path d="M24 2h8l3 22-9-4z" fill="#eee" /></svg>
            <span>Xbox360Co...</span><span>- Unify Com...</span>
          </div>
          <div className="ml-[3px] flex w-[72px] flex-col items-center whitespace-nowrap">
            <svg viewBox="0 0 32 28" className="mb-[4px] h-7 w-8"><path d="M0 0h32v28H0z" fill="#eef3fb" /><path d="M2 4h28M2 8h28M2 12h28M2 16h28M2 20h28M2 24h28" stroke="#8fa6cc" /></svg>
            <span>BlogText.txt</span>
          </div>
          <div className="ml-[1px] flex w-[74px] flex-col items-center whitespace-nowrap">
            <svg viewBox="0 0 36 28" className="mb-[4px] h-7 w-9"><circle cx="18" cy="8" r="18" fill="#45a84c" /><path d="M18 26q14 0 18-16h-12z" fill="#f2c62e" /><circle cx="18" cy="8" r="8" fill="#2f6fd0" stroke="#fff" strokeWidth="2" /></svg>
            <span>C#</span><span>Enumerator</span>
          </div>
        </div>
        <BrowserWindow theme="light" label="Roster" title="XA-EWRCA_ERJA10-GUI: We" fade host="www.smartpref.com" path="/xa/gui.aspx"
          bookmarks={common.map((b) => (b[1].startsWith("Spec") ? [...b, true] : b))}
          className="top-0 left-[6px] h-[690px] w-[1023px]">
          <div className="flex h-full flex-col">
            <div className="min-h-0 flex-1 overflow-hidden"><RosterPage /></div>
            <div className="flex h-5 shrink-0 items-center border-b-4 border-[#8ba6d6] bg-[#f1f1f1] pl-[6px]">
              <svg viewBox="0 0 4 8" className="mr-[6px] h-2 w-1"><path d="M4 0L0 4l4 4z" fill="#a0a0a0" /></svg>
              <div className="h-[12px] flex-1 border border-[#999] bg-[#b8b8b8]" />
            </div>
          </div>
        </BrowserWindow>
        <BrowserWindow theme="dark" label="Bid builder" title="localhost:2073/GUI.aspx" host="localhost" path=":2073/GUI.aspx" backDim
          bookmarks={[...common, ["head", "pixelpaton", "w-[90px]"]]}
          className="top-[302px] left-[191px] h-[490px] w-[1070px]">
          <BuilderPage />
        </BrowserWindow>
      </div>
      <Taskbar />
    </div>
  );
}
